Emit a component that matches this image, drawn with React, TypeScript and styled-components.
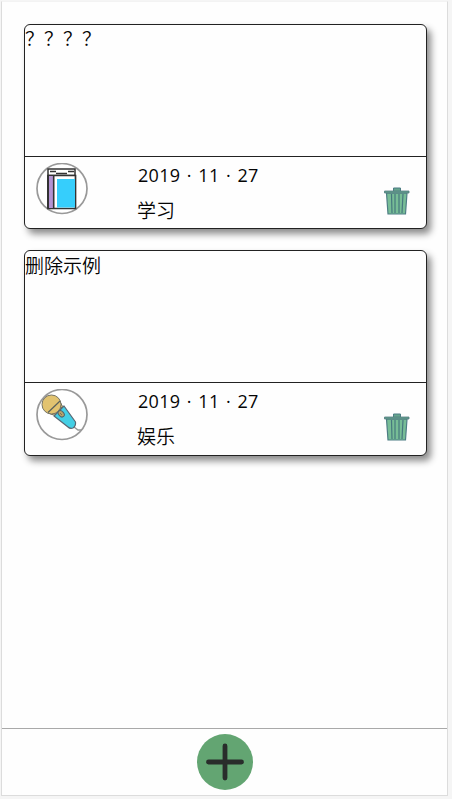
import React from "react";
import styled, { createGlobalStyle } from "styled-components";

const GlobalStyle = createGlobalStyle`
  * { box-sizing: border-box; }
  body { margin: 0; background: #f5f5f5; overflow: hidden; }
`;

const Screen = styled.main`
  display: flex;
  flex-direction: column;
  width: 447px;
  height: 795px;
  margin: 1px 0 0 1px;
  border: 1px solid #dcdcdc;
  border-top-color: #f3f3f3;
  background: #fefefe;
  color: #050505;
  font-family: "Open Sans", "Noto Sans CJK SC", sans-serif;
  font-size: 19px;
`;

const NoteList = styled.section`
  flex: 1;
  display: grid;
  grid-template-rows: 205px 206px;
  align-content: start;
  gap: 21px;
  padding: 22px 20px 0 22px;
`;

const Card = styled.article`
  display: flex;
  flex-direction: column;
  width: 403px;
  border: 1px solid #222;
  border-radius: 6px;
  background: #fefefe;
  box-shadow: 4px 5px 7px rgba(0, 0, 0, 0.45);
`;

const NoteText = styled.p<{ $lineHeight: number }>`
  height: 132px;
  margin: 0;
  border-bottom: 1px solid #222;
  font-family: "Noto Sans CJK SC", sans-serif;
  font-weight: 350;
  line-height: ${({ $lineHeight }) => $lineHeight}px;
`;

const CardFooter = styled.footer`
  flex: 1;
  display: flex;
  align-items: flex-start;
`;

const CategoryBadge = styled.div`
  width: 52px;
  height: 52px;
  margin: 6px 0 0 11px;
  svg { display: block; }
`;

const Details = styled.div`
  flex: 1;
  margin-left: 49px;
  padding-top: 1px;
`;

const NoteDate = styled.time`
  display: block;
  height: 35px;
  line-height: 35px;
  font-size: 18px;
  letter-spacing: 0.3px;
  word-spacing: 1.5px;
  padding-left: 1px;
  white-space: nowrap;
`;

const Category = styled.span`
  display: block;
  height: 35px;
  line-height: 33px;
  font-family: "Noto Sans CJK SC", sans-serif;
  font-weight: 350;
`;

const DeleteButton = styled.button`
  width: 28px;
  height: 30px;
  margin: 30px 15px 0 0;
  padding: 0;
  border: 0;
  background: none;
  svg { display: block; }
`;

const BottomBar = styled.nav`
  display: flex;
  justify-content: center;
  height: 67px;
  padding-top: 5px;
  border-top: 1px solid #a9a9a9;
`;

const AddButton = styled.button`
  width: 56px;
  height: 56px;
  padding: 0;
  border: 0;
  border-radius: 50%;
  background: #63a572;
  svg { display: block; }
`;

const BookIcon = () => (
  <svg width="52" height="52" viewBox="0 0 52 52">
    <circle cx="26" cy="25.5" r="25" fill="#fff" stroke="#999" strokeWidth="1.7" />
    <path d="M12 6H39V12.5H12Z" fill="#fff" stroke="#333" strokeWidth="1.5" />
    <path d="M12 12.5H39.5V45.5H12Z" fill="#fff" stroke="#333" strokeWidth="1.7" />
    <path d="M13 13H17V45H13Z" fill="#b393d3" />
    <path d="M17.7 13V45" stroke="#333" strokeWidth="1.6" />
    <path d="M21 16H39V44.5H21Z" fill="#36cefc" />
    <path d="M14 8.5H20M32 8.5H38M20 10.5H31" stroke="#333" strokeWidth="1.4" />
    <path d="M12 12.5V45.5" stroke="#333" strokeWidth="2" />
  </svg>
);

const MicrophoneIcon = () => (
  <svg width="52" height="52" viewBox="0 0 52 52">
    <circle cx="26" cy="25.5" r="25" fill="#fff" stroke="#999" strokeWidth="1.7" />
    <path d="M38 38L42 41L46 41" fill="none" stroke="#999" strokeWidth="1.5" />
    <path d="M18 27L28 17L39.5 33Q40 37 37 39Q34 40 32 38Z" fill="#44cfe5" stroke="#596773" strokeWidth="1.2" strokeLinejoin="round" />
    <path d="M13.5 24.5L24.5 13.5L26.5 17.5L17.5 26Z" fill="#d9ba69" stroke="#666960" />
    <circle cx="15.5" cy="15.5" r="9.5" fill="#e2c370" stroke="#767466" />
    <path d="M12 23.5L24 12" stroke="#58605c" strokeWidth="1.2" />
    <ellipse cx="25.2" cy="24.8" rx="3.6" ry="2.5" transform="rotate(48 25.2 24.8)" fill="#b9a36a" stroke="#4f646d" />
    <path d="M24 24L26 26" stroke="#77705a" />
  </svg>
);

const TrashIcon = () => (
  <svg width="28" height="30" viewBox="0 0 28 30">
    <path d="M3.5 6H24L22.5 27H5Z" fill="#77bd96" stroke="#4d7d84" strokeWidth="1.2" />
    <path d="M8.5 7L9 26M12 7V26M16 7V26M20 7L19 26" fill="none" stroke="#46777e" strokeWidth="1.2" />
    <path d="M10.5 4V1H17.5V4" fill="#65a58d" stroke="#4d7d84" />
    <path d="M1.5 4H26V6H1.5Z" fill="#629e8d" stroke="#537c82" strokeWidth=".8" />
  </svg>
);

const PlusIcon = () => (
  <svg width="56" height="56" viewBox="0 0 56 56">
    <path d="M28 12V44M11.5 28H44.5" stroke="#292d2b" strokeWidth="4.8" strokeLinecap="round" />
  </svg>
);

const notes = [
  { id: 1, text: "？？？？", lineHeight: 25, date: "2019 · 11 · 27", category: "学习", Icon: BookIcon },
  { id: 2, text: "删除示例", lineHeight: 28, date: "2019 · 11 · 27", category: "娱乐", Icon: MicrophoneIcon },
];

export default function App() {
  return (
    <>
      <GlobalStyle />
      <Screen>
        <NoteList>
          {notes.map(({ id, text, lineHeight, date, category, Icon }) => (
            <Card key={id}>
              <NoteText $lineHeight={lineHeight}>{text}</NoteText>
              <CardFooter>
                <CategoryBadge><Icon /></CategoryBadge>
                <Details>
                  <NoteDate>{date}</NoteDate>
                  <Category>{category}</Category>
                </Details>
                <DeleteButton aria-label="删除"><TrashIcon /></DeleteButton>
              </CardFooter>
            </Card>
          ))}
        </NoteList>
        <BottomBar>
          <AddButton aria-label="添加"><PlusIcon /></AddButton>
        </BottomBar>
      </Screen>
    </>
  );
}
